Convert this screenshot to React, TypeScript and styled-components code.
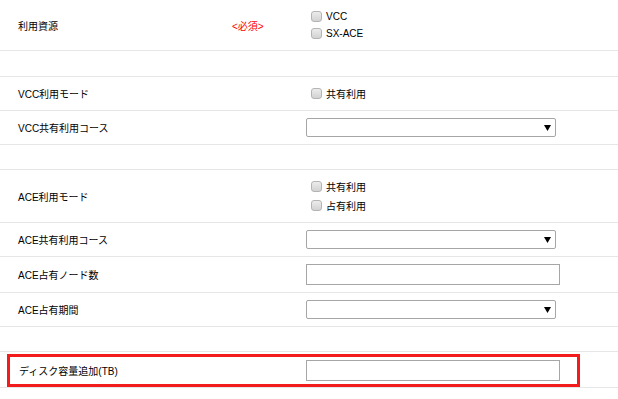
import React from "react";
import styled, { createGlobalStyle } from "styled-components";

const GlobalStyle = createGlobalStyle`
  body {
    margin: 0;
    background: #ffffff;
    font-family: "Liberation Sans", "Noto Sans CJK JP", sans-serif;
    font-size: 10px;
    color: #000000;
  }
`;

const Form = styled.div`
  width: 618px;
`;

const Row = styled.div<{ $h: number }>`
  display: grid;
  grid-template-columns: 214px 74px 1fr;
  align-items: center;
  height: ${(p) => p.$h}px;
  padding-left: 18px;
  border-bottom: 1px solid #e6e6e6;
  box-sizing: border-box;
`;

const HighlightRow = styled.div`
  height: 36px;
  padding-top: 2px;
  border-bottom: 1px solid #e6e6e6;
  box-sizing: border-box;
`;

const Highlight = styled.div`
  display: grid;
  grid-template-columns: 213px 74px 1fr;
  align-items: center;
  margin-left: 7px;
  width: 573px;
  height: 33px;
  padding-left: 9px;
  border: 3px solid #f21c1c;
  box-sizing: border-box;
`;

const Label = styled.div`
  font-size: 10px;
  white-space: nowrap;
`;

const Required = styled.div`
  color: #ff0000;
  font-size: 10px;
`;

const CheckGroup = styled.div<{ $gap: number }>`
  display: flex;
  flex-direction: column;
  gap: ${(p) => p.$gap}px;
  padding-left: 5px;
`;

const CheckLabel = styled.label`
  display: flex;
  align-items: center;
  gap: 4px;
  height: 11px;
  font-size: 10px;
`;

const Box = styled.span`
  display: inline-block;
  width: 11px;
  height: 11px;
  border: 1px solid #b4b4b4;
  border-radius: 3px;
  background: linear-gradient(#ececec, #d2d2d2);
  box-sizing: border-box;
`;

const Select = styled.div`
  display: flex;
  align-items: center;
  justify-content: flex-end;
  width: 250px;
  height: 19px;
  border: 1px solid #a6a6a6;
  border-radius: 2px;
  padding-right: 4px;
  box-sizing: border-box;
  background: #ffffff;
`;

const Input = styled.div`
  width: 254px;
  height: 21px;
  border: 1px solid #a6a6a6;
  box-sizing: border-box;
  background: #ffffff;
`;

const Arrow = () => (
  <svg width="7" height="6" viewBox="0 0 7 6">
    <polygon points="0,0 7,0 3.5,6" fill="#000" />
  </svg>
);

const Check = ({ text }: { text: string }) => (
  <CheckLabel>
    <Box />
    {text}
  </CheckLabel>
);

export default function App() {
  return (
    <Form>
      <GlobalStyle />
      <Row $h={51}>
        <Label>利用資源</Label>
        <Required>&lt;必須&gt;</Required>
        <CheckGroup $gap={6}>
          <Check text="VCC" />
          <Check text="SX-ACE" />
        </CheckGroup>
      </Row>
      <Row $h={26} />
      <Row $h={34}>
        <Label>VCC利用モード</Label>
        <div />
        <CheckGroup $gap={8}>
          <Check text="共有利用" />
        </CheckGroup>
      </Row>
      <Row $h={34}>
        <Label>VCC共有利用コース</Label>
        <div />
        <Select>
          <Arrow />
        </Select>
      </Row>
      <Row $h={25} />
      <Row $h={53}>
        <Label>ACE利用モード</Label>
        <div />
        <CheckGroup $gap={8}>
          <Check text="共有利用" />
          <Check text="占有利用" />
        </CheckGroup>
      </Row>
      <Row $h={34}>
        <Label>ACE共有利用コース</Label>
        <div />
        <Select>
          <Arrow />
        </Select>
      </Row>
      <Row $h={36}>
        <Label>ACE占有ノード数</Label>
        <div />
        <Input />
      </Row>
      <Row $h={34}>
        <Label>ACE占有期間</Label>
        <div />
        <Select>
          <Arrow />
        </Select>
      </Row>
      <Row $h={25} />
      <HighlightRow>
        <Highlight>
          <Label>ディスク容量追加(TB)</Label>
          <div />
          <Input />
        </Highlight>
      </HighlightRow>
    </Form>
  );
}
